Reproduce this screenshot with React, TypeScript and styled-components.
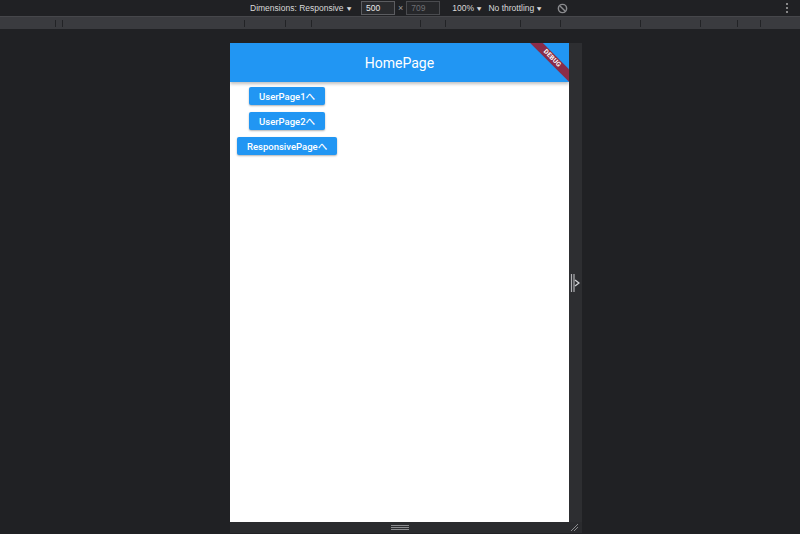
import React from "react";
import styled, { createGlobalStyle } from "styled-components";

const Global = createGlobalStyle`
  html, body { margin: 0; padding: 0; background: #202124; }
  body { width: 800px; height: 534px; overflow: hidden; font-family: Roboto, "Liberation Sans", sans-serif; }
`;

const Screen = styled.div`
  width: 800px;
  height: 534px;
  display: flex;
  flex-direction: column;
  background: #202124;
`;

const Toolbar = styled.div`
  height: 16px;
  display: flex;
  align-items: center;
  padding-left: 250px;
  padding-right: 12px;
  color: #d9d9d9;
  font-family: "Liberation Sans", Arial, sans-serif;
  font-size: 8.5px;
  position: relative;
`;

const ToolItem = styled.span<{ $ml?: number }>`
  margin-left: ${(p) => p.$ml ?? 0}px;
  white-space: nowrap;
  display: flex;
  align-items: center;
  gap: 2px;
`;

const Caret = styled.span`
  font-size: 6.5px;
  transform: scaleX(1.2);
`;

const SizeBox = styled.span<{ $dim?: boolean }>`
  display: inline-block;
  width: 34px;
  height: 14px;
  box-sizing: border-box;
  border: 1px solid ${(p) => (p.$dim ? "#4a4b4f" : "#5c5d61")};
  background: ${(p) => (p.$dim ? "#26272a" : "#2a2b2e")};
  color: ${(p) => (p.$dim ? "#6d6e72" : "#e8e8e8")};
  line-height: 12px;
  padding-left: 4px;
  font-size: 8.5px;
`;

const Times = styled.span`
  color: #9a9a9a;
  margin: 0 1px;
  font-size: 9px;
`;

const Kebab = styled.span`
  margin-left: auto;
  display: flex;
  flex-direction: column;
  gap: 1.5px;
  & > i { width: 2.5px; height: 2.5px; border-radius: 50%; background: #aaa; display: block; }
`;

const Ruler = styled.div`
  height: 13px;
  background: #3a3b3f;
  border-top: 1px solid #46474b;
  box-sizing: border-box;
  position: relative;
`;

const Tick = styled.span`
  position: absolute;
  top: 3px;
  width: 1px;
  height: 7px;
  background: #222326;
`;

const Stage = styled.div`
  flex: 1;
  padding-top: 14px;
  padding-left: 230px;
  display: flex;
`;

const DeviceColumn = styled.div`
  display: flex;
  flex-direction: column;
`;

const DeviceRow = styled.div`
  display: flex;
`;

const Page = styled.div`
  width: 339px;
  height: 479px;
  background: #ffffff;
  display: flex;
  flex-direction: column;
  position: relative;
  overflow: hidden;
`;

const AppBar = styled.div`
  height: 39px;
  background: #2196f3;
  color: #fff;
  display: flex;
  align-items: center;
  justify-content: center;
  font-size: 14px;
  font-family: Roboto, "Noto Sans", sans-serif;
  box-shadow: 0 2px 3px rgba(0, 0, 0, 0.25);
  position: relative;
  z-index: 1;
`;

const Banner = styled.div`
  position: absolute;
  top: 11px;
  right: -21px;
  width: 76px;
  height: 9px;
  background: #8a2c48;
  color: #fff;
  transform: rotate(45deg);
  font-size: 6.5px;
  font-weight: 700;
  font-family: Roboto, sans-serif;
  text-align: center;
  line-height: 9px;
  letter-spacing: 0.2px;
  z-index: 2;
`;

const ButtonList = styled.div`
  display: inline-flex;
  flex-direction: column;
  align-items: center;
  align-self: flex-start;
  padding-left: 7px;
  padding-top: 5px;
  gap: 7px;
`;

const PageButton = styled.button`
  height: 18px;
  padding: 0 10px;
  border: none;
  border-radius: 2px;
  background: #2196f3;
  color: #fff;
  font-family: Roboto, "Noto Sans CJK JP", sans-serif;
  font-weight: 500;
  font-size: 9.5px;
  box-shadow: 0 1px 2px rgba(0, 0, 0, 0.3);
  cursor: pointer;
  min-width: 76px;
  white-space: nowrap;
`;

const SideGutter = styled.div`
  width: 13px;
  height: 479px;
  background: #2d2e31;
  display: flex;
  align-items: center;
  justify-content: flex-end;
  padding-right: 2px;
  box-sizing: border-box;
`;

const BottomGutter = styled.div`
  width: 352px;
  height: 11px;
  background: #2a2b2e;
  display: flex;
  align-items: center;
  justify-content: center;
  position: relative;
`;

const HBars = styled.span`
  display: flex;
  flex-direction: column;
  gap: 1px;
  margin-left: -12px;
  & > i { width: 18px; height: 1px; background: #8a8b8e; display: block; }
`;

const CornerGrip = styled.svg`
  position: absolute;
  right: 3px;
  bottom: 1px;
`;

const ticks = [55, 62, 244, 285, 311, 420, 445, 520, 560, 640, 700, 737, 760];

export default function App() {
  return (
    <Screen>
      <Global />
      <Toolbar>
        <ToolItem>
          Dimensions: Responsive <Caret>▼</Caret>
        </ToolItem>
        <ToolItem $ml={9}>
          <SizeBox>500</SizeBox>
          <Times>×</Times>
          <SizeBox $dim>709</SizeBox>
        </ToolItem>
        <ToolItem $ml={12}>
          100% <Caret>▼</Caret>
        </ToolItem>
        <ToolItem $ml={6}>
          No throttling <Caret>▼</Caret>
        </ToolItem>
        <ToolItem $ml={14}>
          <svg width="11" height="11" viewBox="0 0 12 12">
            <circle cx="6" cy="6" r="4.5" fill="none" stroke="#8a8b8e" strokeWidth="1.6" />
            <line x1="3" y1="3" x2="9" y2="9" stroke="#8a8b8e" strokeWidth="1.6" />
          </svg>
        </ToolItem>
        <Kebab>
          <i />
          <i />
          <i />
        </Kebab>
      </Toolbar>
      <Ruler>
        {ticks.map((x) => (
          <Tick key={x} style={{ left: x }} />
        ))}
      </Ruler>
      <Stage>
        <DeviceColumn>
          <DeviceRow>
            <Page>
              <AppBar>HomePage</AppBar>
              <Banner>DEBUG</Banner>
              <ButtonList>
                <PageButton>UserPage1へ</PageButton>
                <PageButton>UserPage2へ</PageButton>
                <PageButton>ResponsivePageへ</PageButton>
              </ButtonList>
            </Page>
            <SideGutter>
              <svg width="10" height="18" viewBox="0 0 10 18">
                <line x1="1.5" y1="0" x2="1.5" y2="18" stroke="#b0b1b4" strokeWidth="1.2" />
                <line x1="4" y1="0" x2="4" y2="18" stroke="#b0b1b4" strokeWidth="1.2" />
                <path d="M5 6 L9 9 L5 12" fill="none" stroke="#d0d1d4" strokeWidth="1.4" />
              </svg>
            </SideGutter>
          </DeviceRow>
          <BottomGutter>
            <HBars>
              <i />
              <i />
              <i />
            </HBars>
            <CornerGrip width="9" height="9" viewBox="0 0 9 9">
              <line x1="1" y1="8" x2="8" y2="1" stroke="#8a8b8e" strokeWidth="1" />
              <line x1="4" y1="8" x2="8" y2="4" stroke="#8a8b8e" strokeWidth="1" />
            </CornerGrip>
          </BottomGutter>
        </DeviceColumn>
      </Stage>
    </Screen>
  );
}
